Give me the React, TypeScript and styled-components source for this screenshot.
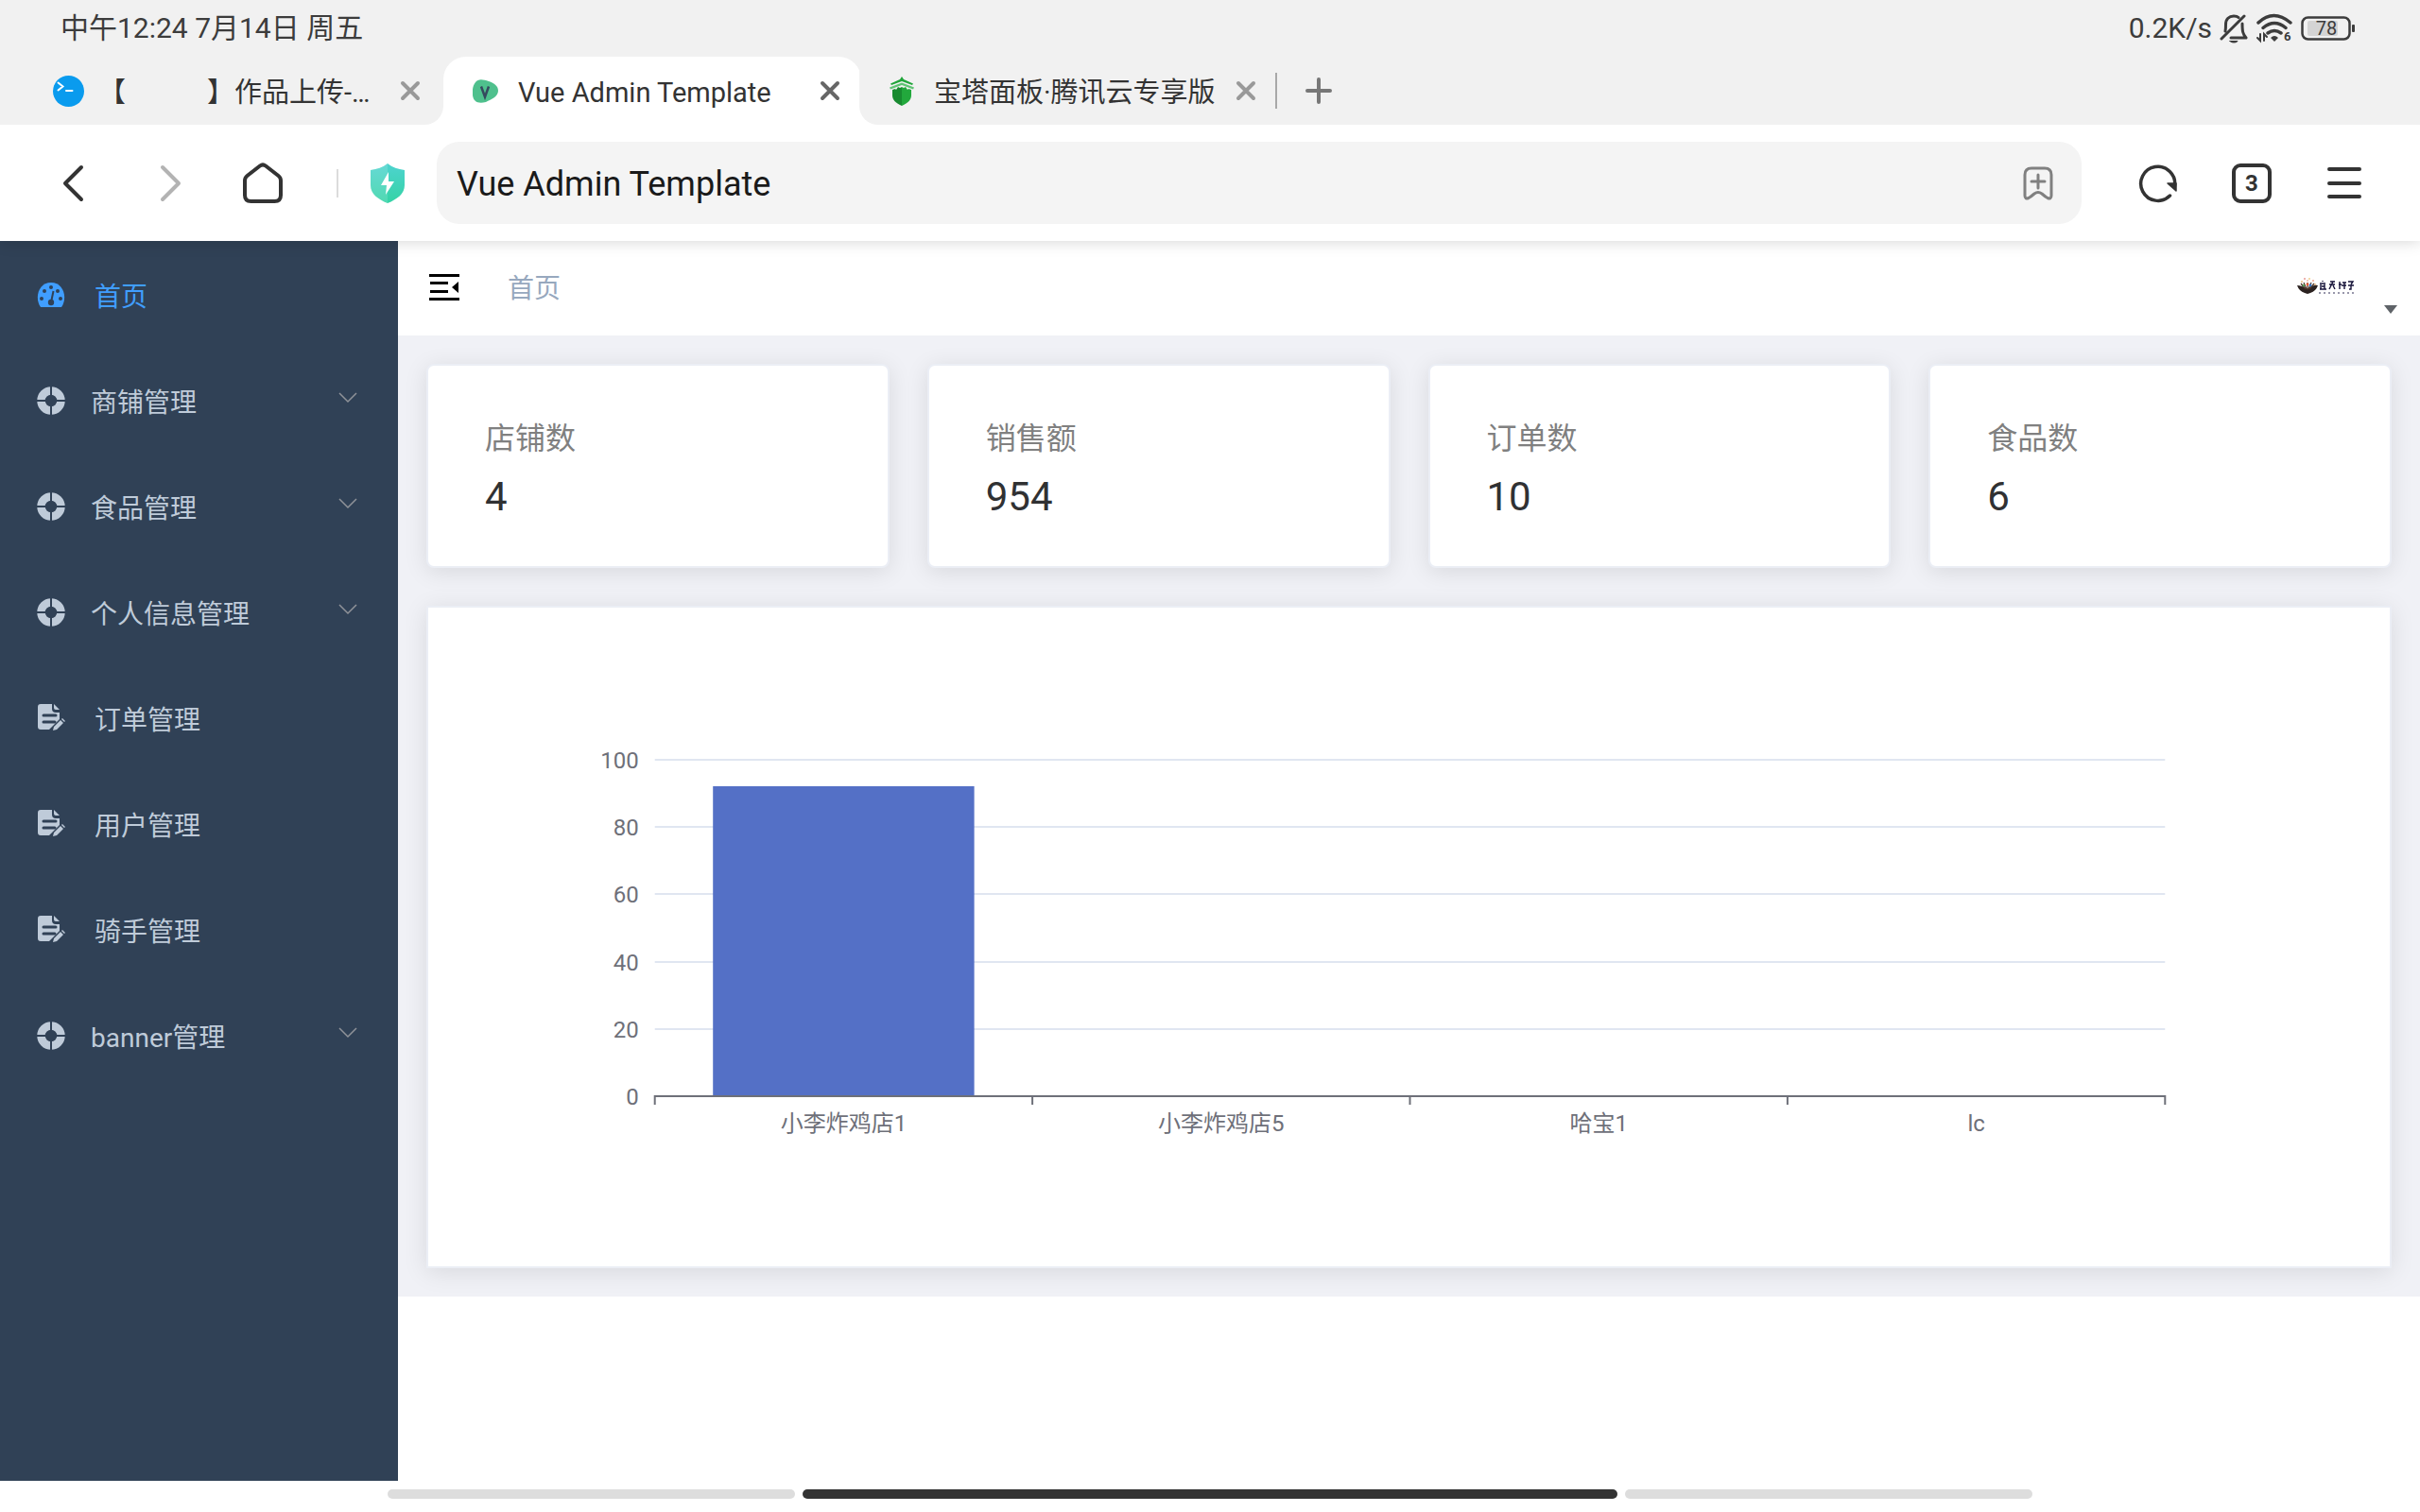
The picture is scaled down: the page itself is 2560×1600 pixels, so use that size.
import React from 'react';
import styled, { createGlobalStyle, css } from 'styled-components';

const latin = 'Roboto, "Noto Sans CJK SC", "Liberation Sans", sans-serif';

const GlobalStyle = createGlobalStyle`
  *, *::before, *::after { box-sizing: border-box; }
  body { margin: 0; background: #fff; font-family: ${latin}; font-size: 28px; color: #303133; }
  button, input { font-family: inherit; font-size: inherit; color: inherit; }
  button { border: 0; padding: 0; background: none; cursor: pointer; }
  a { text-decoration: none; color: inherit; }
  svg { display: block; flex: none; }
  h2, p, ul, dl, dd, dt { margin: 0; padding: 0; }
`;

const Screen = styled.div`
  display: flex;
  flex-direction: column;
  min-height: 100vh;
`;

/* ---------- device status bar ---------- */
const StatusBar = styled.div`
  display: flex;
  align-items: center;
  justify-content: space-between;
  height: 60px;
  padding: 0 68px 0 64px;
  background: #f1f1f1;
  color: #3c3c3c;
  font-size: 30px;
  line-height: 32px;
`;
const StatusGroup = styled.div`
  display: flex;
  align-items: center;
  gap: 8px;
  height: 60px;
`;

/* ---------- tab strip ---------- */
const TabStrip = styled.div`
  position: relative;
  z-index: 2;
  display: flex;
  height: 72px;
  background: #fff;
`;
const StripSection = styled.div<{ $side: 'left' | 'middle' | 'right' }>`
  display: flex;
  align-items: center;
  background: #f1f1f1;
  ${p => p.$side === 'left' && css`width: 469px; border-bottom-right-radius: 20px; padding-left: 56px;`}
  ${p => p.$side === 'middle' && css`width: 440px;`}
  ${p => p.$side === 'right' && css`flex: 1; border-bottom-left-radius: 20px; padding-left: 31px;`}
`;
const TabItem = styled.div<{ $active?: boolean }>`
  display: flex;
  align-items: center;
  height: 72px;
  flex: ${p => (p.$active ? 1 : 'none')};
  padding: ${p => (p.$active ? '0 22px 0 31px' : '0')};
  background: ${p => (p.$active ? '#fff' : 'transparent')};
  border-radius: 24px 24px 0 0;
`;
const TabTitle = styled.button`
  display: flex;
  align-items: center;
  width: 367px;
  height: 72px;
  color: #333;
  font-size: 29px;
  line-height: 40px;
  white-space: nowrap;
  text-align: left;
`;
const TabIcon = styled.span`
  width: 48px;
  flex: none;
`;
const TabText = styled.span`
  padding-top: 3px;
`;
const Redacted = styled.span`
  display: inline-block;
  width: 86px;
`;
const TabClose = styled.button<{ $active?: boolean }>`
  color: ${p => (p.$active ? '#666' : '#999')};
`;
const StripDivider = styled.span`
  width: 2px;
  height: 38px;
  margin: 0 30px 0 20px;
  background: #a8a8a8;
`;

/* ---------- toolbar ---------- */
const Toolbar = styled.div`
  position: relative;
  z-index: 1;
  display: flex;
  align-items: center;
  height: 123px;
  padding: 0 60px 0 56px;
  background: #fff;
  box-shadow: 0 0 16px rgba(0, 0, 0, 0.18);
  color: #333;
`;
const NavButtons = styled.div`
  display: flex;
  align-items: center;
  gap: 54px;
`;
const ToolDivider = styled.span`
  width: 2px;
  height: 30px;
  margin: 0 33px 0 56px;
  background: #dcdcdc;
`;
const AddressBox = styled.div`
  display: flex;
  align-items: center;
  flex: 1;
  height: 87px;
  margin: 0 60px 0 33px;
  padding: 0 30px 0 21px;
  border-radius: 24px;
  background: #f4f4f4;
  color: #808080;
`;
const AddressInput = styled.input`
  flex: 1;
  min-width: 0;
  height: 60px;
  padding: 2px 0 0;
  border: 0;
  outline: 0;
  background: transparent;
  color: #1a1a1a;
  font-size: 36px;
`;
const ToolActions = styled.div`
  display: flex;
  align-items: center;
  gap: 57px;
`;
const TabCount = styled.button`
  width: 42px;
  height: 42px;
  border: 4px solid #333;
  border-radius: 9px;
  font-size: 24px;
  font-weight: 700;
  line-height: 32px;
`;

/* ---------- page ---------- */
const Page = styled.div`
  display: flex;
  flex: 1;
`;
const Sidebar = styled.nav`
  width: 421px;
  flex: none;
  background: #304156;
`;
const MenuList = styled.ul`
  list-style: none;
`;
const MenuLink = styled.a<{ $active?: boolean; $group?: boolean }>`
  display: flex;
  align-items: center;
  height: 112px;
  padding: 0 43px 0 38px;
  gap: ${p => (p.$group ? '26px' : '30px')};
  color: ${p => (p.$active ? '#409eff' : '#bfcbd9')};
  line-height: 40px;
`;
const MenuLabel = styled.span`
  flex: 1;
  padding-top: 8px;
`;
const Arrow = styled.span`
  color: #909399;
  padding-bottom: 4px;
`;
const Main = styled.div`
  flex: 1;
  min-width: 0;
`;
const Navbar = styled.header`
  display: flex;
  align-items: center;
  justify-content: space-between;
  height: 100px;
  padding: 0 23px 2px 32px;
`;
const NavStart = styled.div`
  display: flex;
  align-items: center;
  gap: 50px;
  color: #97a8be;
  line-height: 40px;
`;
const Crumb = styled.span`
  padding-top: 3px;
`;
const Avatar = styled.button`
  display: flex;
  align-items: flex-end;
  gap: 30px;
  padding-top: 18px;
`;
const AvatarImage = styled.span`
  padding-bottom: 20px;
`;
const Dashboard = styled.main`
  display: flex;
  flex-direction: column;
  gap: 40px;
  padding: 30px;
  background: #f0f1f6;
`;
const Stats = styled.dl`
  display: grid;
  grid-template-columns: repeat(4, 1fr);
  gap: 40px;
`;
const panel = css`
  border: 2px solid #ebeef5;
  background: #fff;
  box-shadow: 0 4px 24px rgba(0, 0, 0, 0.1);
`;
const StatCard = styled.div`
  ${panel}
  height: 216px;
  padding: 53px 60px;
  border-radius: 8px;
`;
const StatLabel = styled.dt`
  color: #808080;
  font-size: 32px;
  line-height: 48px;
`;
const StatValue = styled.dd`
  padding-top: 6px;
  font-size: 42px;
  line-height: 64px;
`;
const ChartCard = styled.section`
  ${panel}
  padding: 40px 38px 40px 40px;
`;
const ChartSvg = styled.svg`
  width: 100%;
  height: 617px;
  font-size: 24px;
  fill: #6e7079;
`;

const HomeBar = styled.div`
  display: flex;
  gap: 8px;
  height: 33px;
  padding: 9px 16% 14px;
`;
const Pill = styled.span<{ $main?: boolean }>`
  flex: ${p => (p.$main ? 2 : 1)};
  border-radius: 5px;
  background: ${p => (p.$main ? '#333' : '#ddd')};
`;

/* ---------- icons ---------- */
const CloseIcon = () => (
  <svg width="22" height="22" viewBox="0 0 22 22" stroke="currentColor" strokeWidth="4" strokeLinecap="round">
    <path d="M3 3l16 16M19 3L3 19" />
  </svg>
);
const ShellIcon = () => (
  <svg width="33" height="33" viewBox="0 0 33 33" fill="none">
    <circle cx="16.5" cy="16.5" r="16.5" fill="#0a9bee" />
    <path d="M5.500 7.500l5 4-5 4M14 16h6.500" stroke="#fff" strokeWidth="2" strokeLinecap="round" />
  </svg>
);
const VueIcon = () => (
  <svg width="27" height="25" viewBox="0 0 27 25" fill="none">
    <path d="M3 3C6-1 11 0 17 2c6 2 10 5 10 10 0 6-7 9-13 12C6 26 1 24 0 17-.5 11 0 7 3 3z" fill="#4fc08d" />
    <path d="M9 7.500l4 11 4-11" stroke="#35495e" strokeWidth="2.500" />
  </svg>
);
const PagodaIcon = () => (
  <svg width="28" height="31" viewBox="0 0 28 31" fill="none">
    <path d="M14 0l2 3 10 4.500-1 1.500-11-4L3 9 2 7.500 12 3z" fill="#20a53a" />
    <path d="M14 6.500l13 5-1 2-12-4.500-12 4.500-1-2z" fill="#5fc474" />
    <path d="M4 14l3-1 1 1 2-3 2 1 2-1v20C7 28 4 24 4 20z" fill="#188a30" />
    <path d="M24 14l-3-1-1 1-2-3-2 1-2-1v20c7-3 10-7 10-11z" fill="#22a83c" />
  </svg>
);
const PlusIcon = () => (
  <svg width="28" height="28" viewBox="0 0 28 28" stroke="#777" strokeWidth="4" strokeLinecap="round">
    <path d="M14 2v24M2 14h24" />
  </svg>
);
const Chevron = ({ flip }: { flip?: boolean }) => (
  <svg width="46" height="46" viewBox="0 0 46 46" fill="none" stroke={flip ? '#b3b3b3' : '#333'} strokeWidth="4" strokeLinecap="round" strokeLinejoin="round">
    <path d={flip ? 'M16 6l17 17-17 17' : 'M30 6L13 23l17 17'} />
  </svg>
);
const HomeIcon = () => (
  <svg width="44" height="44" viewBox="0 0 44 44" fill="none" stroke="#333" strokeWidth="4" strokeLinejoin="round">
    <path d="M19 3.500q3-2.200 6 0L38.500 14q2.500 2 2.500 5v15.500q0 6.500-6.500 6.500h-25Q3 41 3 34.500V19q0-3 2.500-5z" />
  </svg>
);
const ShieldIcon = () => (
  <svg width="38" height="42" viewBox="0 0 38 42">
    <defs>
      <linearGradient id="shield" x1="0" y1="0" x2="0" y2="1">
        <stop offset="0" stopColor="#4ed3cf" />
        <stop offset="1" stopColor="#34d3a5" />
      </linearGradient>
    </defs>
    <path d="M19 0c5 4 11 6 18 7v16c0 9-8 15-18 19C9 38 1 32 1 23V7c7-1 13-3 18-7z" fill="url(#shield)" />
    <path d="M19 0C14 4 8 6 1 7v16c0 9 8 15 18 19z" fill="#fff" opacity="0.140" />
    <path d="M20 9l-8 14h6l-1 10 9-14h-6z" fill="#fff" />
  </svg>
);
const BookmarkIcon = () => (
  <svg width="32" height="36" viewBox="0 0 32 36" fill="none" stroke="currentColor" strokeWidth="3" strokeLinecap="round" strokeLinejoin="round">
    <path d="M9 2h14q7 0 7 7v22q0 4-4 2.500-2-1-6-4.500-4-3-8 0-4 3.500-6 4.500-4 1.500-4-2.500V9q0-7 7-7zM16 9v14M9 16h14" />
  </svg>
);
const ReloadIcon = () => (
  <svg width="42" height="42" viewBox="0 0 42 42" fill="none">
    <path d="M33.500 34A18 18 0 1 1 38.500 24" stroke="#333" strokeWidth="3.500" strokeLinecap="round" />
    <path d="M31 21h9v8z" fill="#333" stroke="#333" strokeWidth="1.500" strokeLinejoin="round" />
  </svg>
);
const MenuIcon = () => (
  <svg width="40" height="42" viewBox="0 0 40 42" stroke="#333" strokeWidth="4" strokeLinecap="round">
    <path d="M4 6h32M4 21h32M4 35h32" />
  </svg>
);
const BellOffIcon = () => (
  <svg width="30" height="32" viewBox="0 0 30 32" fill="none" stroke="#3c3c3c" strokeWidth="3" strokeLinecap="round" strokeLinejoin="round">
    <path d="M2 27L26 3M6 19c.5-2 .5-4 .5-7 0-6 3.500-9 8.500-9 2.500 0 4 .5 5 1.500M24 11c0 8 .5 11 4 15H12" />
    <path d="M11 29.500h8c-1 2-7 2-8 0z" fill="#3c3c3c" strokeWidth="1" />
  </svg>
);
const WifiIcon = () => (
  <svg width="40" height="34" viewBox="0 0 40 34" fill="none" stroke="#3c3c3c" strokeWidth="3.500" strokeLinecap="round">
    <path d="M3 11q16-15 34 0M8 16.500q12-10 24 0M13 22q7-5 14 0" />
    <path d="M16 27q4-4 8 0l-4 4z" fill="#3c3c3c" stroke="none" />
    <path d="M5 23v7l-3-3M9 30v-7l3 3" strokeWidth="2" />
    <text x="30" y="30" fill="#3c3c3c" stroke="none" fontSize="13" fontWeight="700">6</text>
  </svg>
);
const BatteryIcon = () => (
  <svg width="58" height="26" viewBox="0 0 58 26" fill="none">
    <rect x="1.500" y="1.500" width="50" height="23" rx="6" stroke="#3c3c3c" strokeWidth="2.500" />
    <rect x="7" y="5" width="32" height="16" rx="2" fill="#d4d4d4" />
    <rect x="54" y="9" width="3" height="8" rx="1" fill="#3c3c3c" />
    <text x="27" y="20" fill="#3c3c3c" fontSize="20" textAnchor="middle">78</text>
  </svg>
);
const DashboardIcon = () => (
  <svg width="32" height="32" viewBox="0 0 32 32">
    <path d="M5 30C-2 20 3 4 16 4s18 16 11 26z" fill="currentColor" />
    <g fill="#304156">
      <circle cx="16" cy="9" r="2" /><circle cx="9" cy="13" r="2" /><circle cx="23" cy="13" r="2" />
      <circle cx="6" cy="21" r="2" /><circle cx="26" cy="21" r="2" /><circle cx="16" cy="25" r="3.200" />
    </g>
    <path d="M16 25l2.500-12" stroke="#304156" strokeWidth="2" />
  </svg>
);
const HelpIcon = () => (
  <svg width="32" height="32" viewBox="0 0 32 32" fill="none">
    <circle cx="16" cy="17" r="10.500" stroke="currentColor" strokeWidth="8.500" />
    <path d="M16 1v32M0 17h32" stroke="#304156" strokeWidth="2" />
  </svg>
);
const DocIcon = () => (
  <svg width="32" height="32" viewBox="0 0 32 32" fill="currentColor">
    <path d="M5 2h12v5q0 4 4 4h4v7L14 29H5q-3 0-3-3V5q0-3 3-3z" />
    <path d="M19 2l6 6h-4q-2 0-2-2z" />
    <path d="M8 14h13M8 21h12" stroke="#304156" strokeWidth="3" strokeLinecap="round" />
    <path d="M18 30l1-4 7-7 3 3-7 7zM27 18l1-1 3 3-1 1z" />
  </svg>
);
const FoldIcon = () => (
  <svg width="34" height="30" viewBox="0 0 34 30" fill="#000">
    <path d="M1 1h32v3H1zM2 9h19v3H2zM2 18h19v3H2zM1 26h32v3H1zM25 15l7-6v12z" />
  </svg>
);
const BrandMark = () => (
  <svg width="62" height="20" viewBox="0 0 62 20">
    <path d="M1 9q5 0 11 4 6-5 11-4-2 6-8 8l-3 1-3-1q-6-2-8-8z" fill="#2b2220" />
    <path d="M5 7l5 6M19 7l-5 6M12 6v8M8 6l3 7M16 6l-3 7" stroke="#4b3328" strokeWidth="1.200" />
    <g>
      <circle cx="6" cy="5" r="0.800" fill="#e0953a" /><circle cx="9" cy="2" r="0.800" fill="#d9534a" />
      <circle cx="14" cy="2" r="0.800" fill="#e5b23c" /><circle cx="18" cy="4" r="0.800" fill="#e26a46" />
      <circle cx="12" cy="8" r="1.400" fill="#e8562f" /><circle cx="8" cy="9" r="1.200" fill="#54a35a" />
      <circle cx="15" cy="9" r="1.400" fill="#3978c9" /><circle cx="20" cy="8" r="0.800" fill="#d98832" />
      <circle cx="12" cy="4" r="0.800" fill="#e58f70" />
    </g>
    <g stroke="#151238" strokeWidth="1.400" fill="none">
      <path d="M28 4v1M25 7h6M26 8v5M30 8v5M27 10h3M25 13h7" />
      <path d="M36 5h5M35 8h6M39 5l-4 8M39 9l2 4" />
      <path d="M46 5v8M45 8h3M49 6h4M48 9h5M51 6v7" />
      <path d="M55 5h5l-2 3M55 9h6M58 9v4h-2" />
    </g>
    <path d="M24 17h37" stroke="#77758e" strokeWidth="1.500" strokeDasharray="2 3" />
  </svg>
);
const CaretIcon = () => (
  <svg width="16" height="10" viewBox="0 0 16 10"><path d="M1 0h14L8 9z" fill="#5f6368" /></svg>
);
const ArrowDown = () => (
  <svg width="20" height="12" viewBox="0 0 20 12" fill="none" stroke="currentColor" strokeWidth="1.500"><path d="M1 1l9 9 9-9" /></svg>
);

/* ---------- data ---------- */
type MenuEntry = { label: string; kind: 'home' | 'group' | 'page' };
const menu: MenuEntry[] = [
  { label: '首页', kind: 'home' },
  { label: '商铺管理', kind: 'group' },
  { label: '食品管理', kind: 'group' },
  { label: '个人信息管理', kind: 'group' },
  { label: '订单管理', kind: 'page' },
  { label: '用户管理', kind: 'page' },
  { label: '骑手管理', kind: 'page' },
  { label: 'banner管理', kind: 'group' },
];
const menuIcons = { home: DashboardIcon, group: HelpIcon, page: DocIcon };

const stats = [
  { label: '店铺数', value: 4 },
  { label: '销售额', value: 954 },
  { label: '订单数', value: 10 },
  { label: '食品数', value: 6 },
];

const sales = [
  { shop: '小李炸鸡店1', value: 92 },
  { shop: '小李炸鸡店5', value: 0 },
  { shop: '哈宝1', value: 0 },
  { shop: 'lc', value: 0 },
];

function BarChart() {
  const top = 121;
  const base = 477;
  const y = (v: number) => Math.round(base - ((base - top) * v) / 100);
  return (
    <ChartSvg role="img" aria-label="店铺销售额">
      {[100, 80, 60, 40, 20, 0].map(v => (
        <g key={v}>
          {v > 0 && <line x1="10%" x2="90%" y1={y(v)} y2={y(v)} stroke="#e0e6f1" strokeWidth="2" />}
          <text x="10%" dx="-17" y={y(v) + 9} textAnchor="end">{v}</text>
        </g>
      ))}
      {sales.map((s, i) => (
        <g key={s.shop}>
          <rect x={`${10 + i * 20 + 3.08}%`} width="13.84%" y={y(s.value)} height={base - y(s.value)} fill="#5470c6" />
          <text x={`${20 + i * 20}%`} y="514" textAnchor="middle">{s.shop}</text>
        </g>
      ))}
      <line x1="10%" x2="90%" y1={base} y2={base} stroke="#6e7079" strokeWidth="2" />
      {[10, 30, 50, 70, 90].map(x => (
        <line key={x} x1={`${x}%`} x2={`${x}%`} y1={base - 1} y2={base + 9} stroke="#6e7079" strokeWidth="2" />
      ))}
    </ChartSvg>
  );
}

export default function App() {
  return (
    <Screen>
      <GlobalStyle />
      <StatusBar>
        <span>中午12:24 7月14日 周五</span>
        <StatusGroup>
          <span>0.2K/s</span>
          <BellOffIcon />
          <WifiIcon />
          <BatteryIcon />
        </StatusGroup>
      </StatusBar>

      <TabStrip>
        <StripSection $side="left">
          <TabItem>
            <TabTitle>
              <TabIcon><ShellIcon /></TabIcon>
              <TabText>【<Redacted />】作品上传-…</TabText>
            </TabTitle>
            <TabClose aria-label="关闭"><CloseIcon /></TabClose>
          </TabItem>
        </StripSection>
        <StripSection $side="middle">
          <TabItem $active>
            <TabTitle>
              <TabIcon><VueIcon /></TabIcon>
              <TabText>Vue Admin Template</TabText>
            </TabTitle>
            <TabClose $active aria-label="关闭"><CloseIcon /></TabClose>
          </TabItem>
        </StripSection>
        <StripSection $side="right">
          <TabItem>
            <TabTitle>
              <TabIcon><PagodaIcon /></TabIcon>
              <TabText>宝塔面板·腾讯云专享版</TabText>
            </TabTitle>
            <TabClose aria-label="关闭"><CloseIcon /></TabClose>
          </TabItem>
          <StripDivider />
          <button aria-label="新标签页"><PlusIcon /></button>
        </StripSection>
      </TabStrip>

      <Toolbar>
        <NavButtons>
          <button aria-label="后退"><Chevron /></button>
          <button aria-label="前进"><Chevron flip /></button>
          <button aria-label="主页"><HomeIcon /></button>
        </NavButtons>
        <ToolDivider />
        <ShieldIcon />
        <AddressBox>
          <AddressInput aria-label="地址" defaultValue="Vue Admin Template" />
          <button aria-label="添加书签"><BookmarkIcon /></button>
        </AddressBox>
        <ToolActions>
          <button aria-label="刷新"><ReloadIcon /></button>
          <TabCount aria-label="标签页">3</TabCount>
          <button aria-label="菜单"><MenuIcon /></button>
        </ToolActions>
      </Toolbar>

      <Page>
        <Sidebar>
          <MenuList>
            {menu.map(({ label, kind }) => {
              const Icon = menuIcons[kind];
              return (
                <li key={label}>
                  <MenuLink href="#" $active={kind === 'home'} $group={kind === 'group'}>
                    <Icon />
                    <MenuLabel>{label}</MenuLabel>
                    {kind === 'group' && <Arrow><ArrowDown /></Arrow>}
                  </MenuLink>
                </li>
              );
            })}
          </MenuList>
        </Sidebar>
        <Main>
          <Navbar>
            <NavStart>
              <button aria-label="收起菜单"><FoldIcon /></button>
              <Crumb>首页</Crumb>
            </NavStart>
            <Avatar aria-label="用户菜单">
              <AvatarImage><BrandMark /></AvatarImage>
              <CaretIcon />
            </Avatar>
          </Navbar>
          <Dashboard>
            <Stats>
              {stats.map(s => (
                <StatCard key={s.label}>
                  <StatLabel>{s.label}</StatLabel>
                  <StatValue>{s.value}</StatValue>
                </StatCard>
              ))}
            </Stats>
            <ChartCard>
              <BarChart />
            </ChartCard>
          </Dashboard>
        </Main>
      </Page>

      <HomeBar>
        <Pill />
        <Pill $main />
        <Pill />
      </HomeBar>
    </Screen>
  );
}
